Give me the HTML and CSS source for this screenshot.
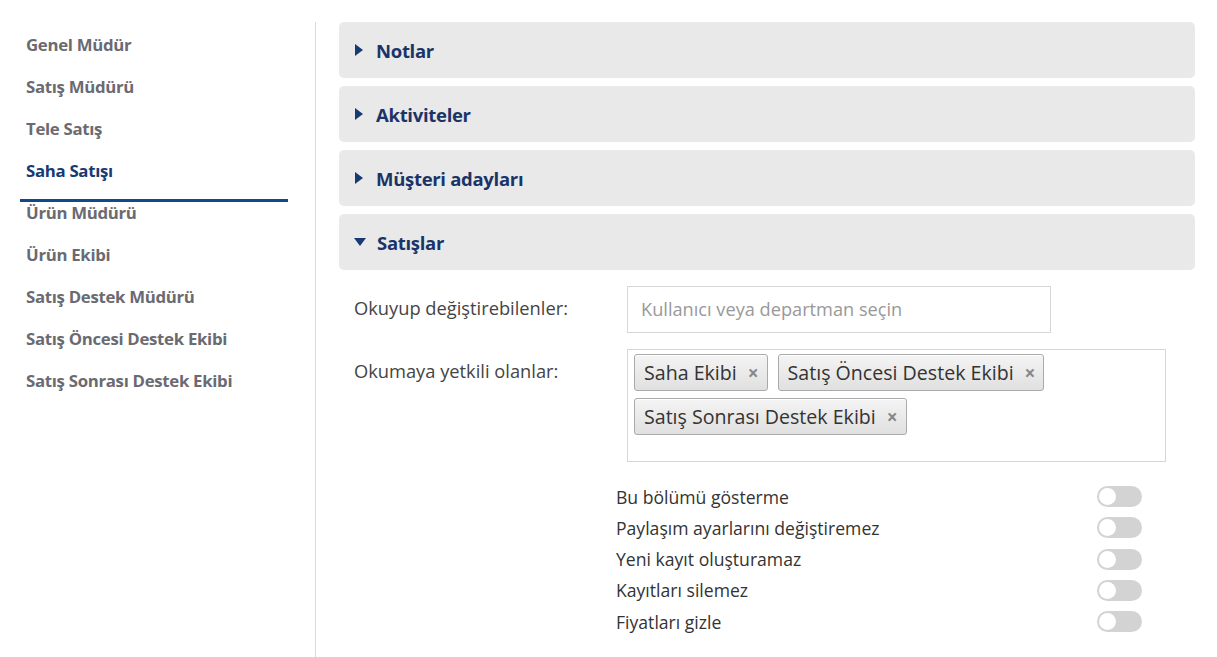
FILE: index.html
```html
<!DOCTYPE html>
<html lang="tr">
<head>
<meta charset="utf-8">
<link rel="stylesheet" href="styles.css">
</head>
<body>
<div class="page">
  <nav class="sidebar">
    <div class="nav-item">Genel Müdür</div>
    <div class="nav-item">Satış Müdürü</div>
    <div class="nav-item">Tele Satış</div>
    <div class="nav-item active">Saha Satışı</div>
    <div class="nav-item">Ürün Müdürü</div>
    <div class="nav-item">Ürün Ekibi</div>
    <div class="nav-item">Satış Destek Müdürü</div>
    <div class="nav-item">Satış Öncesi Destek Ekibi</div>
    <div class="nav-item">Satış Sonrası Destek Ekibi</div>
  </nav>
  <div class="divider"></div>
  <main class="content">
    <div class="panel"><span class="tri right"></span>Notlar</div>
    <div class="panel"><span class="tri right"></span>Aktiviteler</div>
    <div class="panel"><span class="tri right"></span>Müşteri adayları</div>
    <div class="panel"><span class="tri down"></span>Satışlar</div>
    <div class="form">
      <div class="row">
        <div class="label">Okuyup değiştirebilenler:</div>
        <div class="input">Kullanıcı veya departman seçin</div>
      </div>
      <div class="row">
        <div class="label">Okumaya yetkili olanlar:</div>
        <div class="tagbox">
          <span class="tag">Saha Ekibi<span class="x">×</span></span>
          <span class="tag">Satış Öncesi Destek Ekibi<span class="x">×</span></span>
          <span class="tag">Satış Sonrası Destek Ekibi<span class="x">×</span></span>
        </div>
      </div>
    </div>
    <div class="options">
      <div class="opt"><span>Bu bölümü gösterme</span><span class="toggle"></span></div>
      <div class="opt"><span>Paylaşım ayarlarını değiştiremez</span><span class="toggle"></span></div>
      <div class="opt"><span>Yeni kayıt oluşturamaz</span><span class="toggle"></span></div>
      <div class="opt"><span>Kayıtları silemez</span><span class="toggle"></span></div>
      <div class="opt"><span>Fiyatları gizle</span><span class="toggle"></span></div>
    </div>
  </main>
</div>
</body>
</html>
```
FILE: styles.css
```css
html, body { margin: 0; padding: 0; background: #fff; }
body { font-family: "Open Sans", "Noto Sans", sans-serif; width: 1217px; height: 657px; overflow: hidden; }
.page { display: flex; height: 657px; }
.sidebar { width: 268px; margin-left: 20px; padding-top: 33px; display: flex; flex-direction: column; }
.nav-item { font-size: 16.8px; font-weight: 700; color: #6a6a72; height: 42px; line-height: 24px; padding-left: 6px; box-sizing: border-box; letter-spacing: -0.3px; white-space: nowrap; }
.nav-item.active { color: #173a72; border-bottom: 3px solid #0c4a8c; height: 43px; margin-bottom: -1px; }
.divider { width: 1px; background: #d9d9d9; margin: 22px 23px 0 27px; }
.content { width: 856px; padding-top: 22px; display: flex; flex-direction: column; }
.panel { height: 56px; background: #e9e9e9; border-radius: 5px; margin-bottom: 8px; display: flex; align-items: center; padding-left: 16px; font-size: 18.5px; font-weight: 700; color: #1b3468; letter-spacing: -0.3px; }
.tri { width: 0; height: 0; margin-right: 13px; }
.tri.right { border-top: 6px solid transparent; border-bottom: 6px solid transparent; border-left: 8px solid #173a72; }
.tri.down { border-left: 6px solid transparent; border-right: 6px solid transparent; border-top: 8px solid #173a72; margin-left: -1px; margin-right: 11px; }
.form { padding-left: 15px; padding-top: 8px; }
.row { display: flex; margin-bottom: 16px; }
.label { width: 273px; font-size: 18.3px; color: #444; padding-top: 9px; white-space: nowrap; }
.input { width: 409px; height: 45px; border: 1px solid #d6d6d6; font-size: 18.2px; color: #999; line-height: 45px; padding-left: 13px; white-space: nowrap; }
.tagbox { width: 531px; height: 107px; border: 1px solid #d6d6d6; padding: 4px 0 0 6px; display: flex; flex-wrap: wrap; align-content: flex-start; gap: 7px 10px; }
.tag { height: 35px; border: 1px solid #aaa; border-radius: 3px; background: linear-gradient(#f4f4f4, #e0e0e0); box-shadow: inset 0 1px 0 #fff; font-size: 19.6px; color: #333; display: flex; align-items: center; padding: 0 8px 0 9px; white-space: nowrap; }
.x { font-size: 19px; color: #888; margin-left: 11px; font-weight: 700; }
.options { padding-left: 277px; padding-top: 3px; width: 526px; }
.opt { display: flex; justify-content: space-between; align-items: center; height: 31.25px; font-size: 17.6px; color: #333; white-space: nowrap; }
.toggle { width: 45px; height: 21px; border-radius: 11px; background: #d3d3d3; position: relative; }
.toggle::after { content: ""; position: absolute; left: 2px; top: 2px; width: 17px; height: 17px; border-radius: 50%; background: #fff; }
```
